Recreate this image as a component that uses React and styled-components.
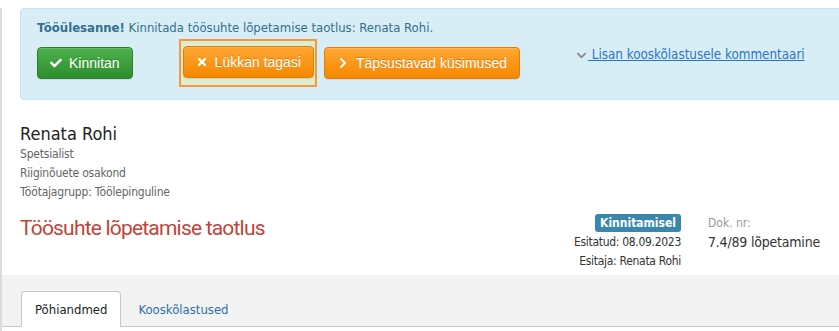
import React from 'react';
import styled, { createGlobalStyle } from 'styled-components';
import { FaCheck, FaTimes, FaChevronRight, FaChevronDown } from 'react-icons/fa';

const GlobalStyle = createGlobalStyle`
    html, body {
        margin: 0;
        padding: 0;
        background: #fff;
        overflow: hidden;
    }
    body {
        font-family: "DejaVu Sans Condensed", "DejaVu Sans", sans-serif;
        color: #333;
    }
`;

const Page = styled.div`
    border-left: 2px solid #dcdcdc;
    min-height: 331px;
    box-sizing: border-box;
`;

const Alert = styled.div`
    margin: 8px -20px 0 18px;
    padding: 11px 16px 0 16px;
    height: 92px;
    box-sizing: border-box;
    background: #d9edf7;
    border: 1px solid #bce8f1;
    border-radius: 4px;
    color: #31708f;
    font-size: 13px;
`;

const AlertText = styled.div`
    line-height: 16px;

    b {
        font-weight: bold;
    }
`;

const ButtonRow = styled.div`
    display: flex;
    align-items: center;
    margin-top: 3px;
`;

const Button = styled.button`
    display: inline-flex;
    align-items: center;
    gap: 7px;
    height: 32px;
    padding: 0 12px;
    box-sizing: border-box;
    font-family: "Liberation Sans", Arial, sans-serif;
    font-size: 14px;
    color: #fff;
    text-shadow: 0 -1px 0 rgba(0, 0, 0, 0.2);
    border-radius: 4px;
    cursor: pointer;
    background: ${p => p.$variant === 'success'
        ? 'linear-gradient(#4cb14c, #2d8e2d)'
        : 'linear-gradient(#ffa733, #f58800)'};
    border: 1px solid ${p => p.$variant === 'success' ? '#2a812a' : '#df7d06'};
    box-shadow: inset 0 1px 0 rgba(255, 255, 255, 0.15), 0 1px 1px rgba(0, 0, 0, 0.08);

    svg {
        font-size: 12px;
    }
`;

const Highlight = styled.span`
    display: inline-flex;
    padding: 5px 1px 7px 2px;
    margin: 0 7px 0 46px;
    background: #dcecce;
    border: 2px solid #f7983a;
`;

const CommentLink = styled.a`
    display: inline-flex;
    align-items: center;
    align-self: flex-start;
    margin: 8px 0 0 56px;
    color: #2a77c9;
    font-size: 13.3px;
    line-height: 16px;
    cursor: pointer;
    white-space: pre;

    svg {
        color: #8c8c8c;
        font-size: 11px;
        margin-right: 1px;
    }

    span {
        text-decoration: underline;
    }
`;

const Person = styled.div`
    padding: 23px 18px 0 18px;
`;

const Name = styled.div`
    font-size: 18px;
    color: #222;
    line-height: 22px;
`;

const Meta = styled.div`
    font-size: 12px;
    letter-spacing: -0.2px;
    color: #666;
    line-height: 19px;
`;

const HeaderRow = styled.div`
    display: flex;
    align-items: flex-start;
    padding: 12px 18px 0 18px;
    height: 61px;
`;

const Title = styled.h1`
    flex: 1;
    margin: 2px 0 0 0;
    font-family: Roboto, sans-serif;
    font-weight: 400;
    font-size: 21px;
    letter-spacing: -0.8px;
    color: #c0453a;
`;

const Status = styled.div`
    display: flex;
    flex-direction: column;
    align-items: flex-end;
    font-size: 12px;
    letter-spacing: -0.3px;
    color: #333;
    line-height: 19px;
    margin-right: 27px;
`;

const Badge = styled.span`
    background: #3a87ad;
    color: #fff;
    font-weight: bold;
    font-size: 12px;
    letter-spacing: 0;
    line-height: 18px;
    padding: 0 5px;
    border-radius: 3px;
    margin-bottom: 1px;
`;

const DocNr = styled.div`
    width: 113px;
    margin-top: 1px;
    white-space: nowrap;
`;

const DocLabel = styled.div`
    font-size: 12px;
    color: #999;
    line-height: 16px;
`;

const DocValue = styled.div`
    font-size: 14px;
    letter-spacing: -0.2px;
    color: #333;
    margin-top: 3px;
`;

const TabBar = styled.div`
    display: flex;
    align-items: flex-end;
    height: 51px;
    padding-left: 19px;
    background: #f3f3f3;
    border-bottom: 1px solid #c8c8c8;
`;

const Tab = styled.div`
    height: 36px;
    box-sizing: border-box;
    display: flex;
    align-items: center;
    padding: 0 ${p => p.$active ? '13px' : '16px'};
    font-size: 13px;
    color: ${p => p.$active ? '#222' : '#2f6fa8'};
    background: ${p => p.$active ? '#fff' : 'transparent'};
    border: 1px solid ${p => p.$active ? '#c8c8c8' : 'transparent'};
    border-bottom: none;
    border-radius: 4px 4px 0 0;
    margin-bottom: -1px;
`;

export default function App() {
    return (
        <Page>
            <GlobalStyle />
            <Alert>
                <AlertText>
                    <b>Tööülesanne!</b> Kinnitada töösuhte lõpetamise taotlus: Renata Rohi.
                </AlertText>
                <ButtonRow>
                    <Button $variant="success"><FaCheck /> Kinnitan</Button>
                    <Highlight>
                        <Button $variant="warning"><FaTimes /> Lükkan tagasi</Button>
                    </Highlight>
                    <Button $variant="warning"><FaChevronRight /> Täpsustavad küsimused</Button>
                    <CommentLink><FaChevronDown /><span> Lisan kooskõlastusele kommentaari</span></CommentLink>
                </ButtonRow>
            </Alert>
            <Person>
                <Name>Renata Rohi</Name>
                <Meta>Spetsialist</Meta>
                <Meta>Riiginõuete osakond</Meta>
                <Meta>Töötajagrupp: Töölepinguline</Meta>
            </Person>
            <HeaderRow>
                <Title>Töösuhte lõpetamise taotlus</Title>
                <Status>
                    <Badge>Kinnitamisel</Badge>
                    <span>Esitatud: 08.09.2023</span>
                    <span>Esitaja: Renata Rohi</span>
                </Status>
                <DocNr>
                    <DocLabel>Dok. nr:</DocLabel>
                    <DocValue>7.4/89 lõpetamine</DocValue>
                </DocNr>
            </HeaderRow>
            <TabBar>
                <Tab $active>Põhiandmed</Tab>
                <Tab>Kooskõlastused</Tab>
            </TabBar>
        </Page>
    );
}
